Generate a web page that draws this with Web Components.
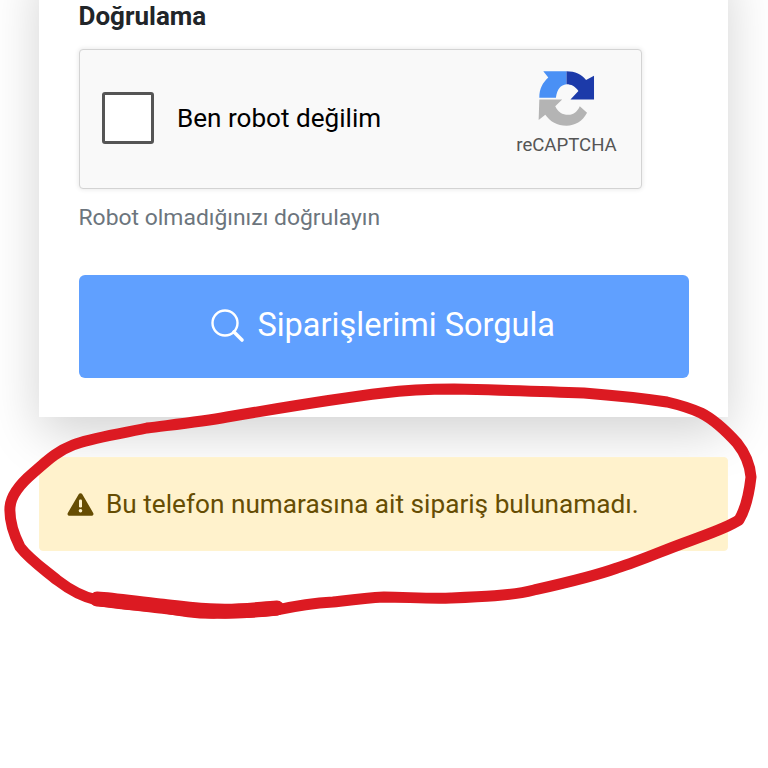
<!DOCTYPE html>
<html lang="tr"><head><meta charset="utf-8"><style>
html,body{margin:0;height:768px;overflow:hidden;background:#fff;font-family:Roboto,"Liberation Sans",sans-serif}
</style></head><body>
<x-page>
  <x-card>
    <x-captcha></x-captcha>
    <x-button>Siparişlerimi Sorgula</x-button>
  </x-card>
  <x-alert>Bu telefon numarasına ait sipariş bulunamadı.</x-alert>
</x-page>
<script>
function def(name, html){
  customElements.define(name, class extends HTMLElement{
    constructor(){super();this.attachShadow({mode:'open'}).innerHTML=html;}
  });
}
def('x-page',`<style>
:host{display:block;position:relative;width:768px;height:768px;overflow:hidden}
.col{display:flex;flex-direction:column;padding:0 39px;margin-top:-40px;box-sizing:border-box;width:767px}
svg{position:absolute;left:0;top:0;pointer-events:none}
</style>
<div class="col"><slot></slot></div>
<svg width="768" height="768" viewBox="0 0 768 768" fill="none">
<path d="M454 389C420 389 398 391 383 393C340 398 280 408 227 417C200 422 170 425 147 428C115 435 90 438 73 445C55 452 45 463 33 473C20 484 11 495 10 507C9 522 14 535 20 547C30 560 45 570 57 580C70 590 82 597 97 600C115 604 138 605 160 607C180 611 200 614 217 613C240 613 260 612 277 610C295 606 315 603 333 602C350 600 365 598 384 597C405 597 430 599 451 598C480 597 510 596 534 590C565 583 592 577 617 568C640 561 662 551 684 543C705 535 725 529 739 520C745 510 749 495 751 477C750 465 745 453 737 443C727 432 715 420 701 413C690 408 680 405 667 402C640 398 610 395 584 393C540 391 495 390 454 389Z" stroke="#dc1a22" stroke-width="11" stroke-linejoin="round"/>
<path d="M97 599C115 600 140 604 160 606C180 608 200 611 217 611C240 612 260 609 277 608" stroke="#dc1a22" stroke-width="15" stroke-linecap="round"/>
</svg>`);
def('x-card',`<style>
:host{display:block;background:#fff;box-shadow:0 16px 48px rgba(0,0,0,.175);padding:40px 39px 39px 39.5px;position:relative}
h3{margin:0;font:700 26px/32px Roboto,sans-serif;color:#212529}
</style>
<h3>Doğrulama</h3>
<div style="height:17px"></div>
<slot></slot>`);
def('x-captcha',`<style>
:host{display:block}
.box{width:563px;height:140px;box-sizing:border-box;background:#f9f9f9;border:1px solid #d3d3d3;border-radius:4px;box-shadow:0 0 4px 1px rgba(0,0,0,.08);display:flex;align-items:center;padding:0 23px 0 22.5px}
.check{width:52px;height:52px;box-sizing:border-box;background:#fff;border:3.5px solid #555;border-radius:3px;flex:none;margin-top:-3px}
.label{font:400 26.1px/32px Roboto,sans-serif;color:#000;margin-left:23px;flex:1;margin-top:-3px}
.logo{display:flex;flex-direction:column;align-items:center;width:102px;margin-top:-14px;position:relative;left:0}
.logo svg{display:block}
.logo span{font:400 18.6px/22px Roboto,sans-serif;color:#555;margin-top:3px}
.hint{font:400 22.9px/28px Roboto,sans-serif;color:#6c757d;margin:15px 0 43px}
</style>
<div class="box">
  <span class="check"></span>
  <span class="label">Ben robot değilim</span>
  <span class="logo">
    <svg width="63" height="63" viewBox="105 55 190 190">
      <path fill="#4a90f5" d="M130 65H200V104C182 106 172 118 168 145H118C118 118 128 100 145 84Z"/>
      <path fill="#1c3aa9" d="M200 65C226 65 246 74 259 91L283 78V150H212L236 124C226 110 214 104 200 104Z"/>
      <path fill="#b4b4b4" d="M118 150H187L166 170C174 188 188 196 205 196C222 196 233 186 240 170L262 190C248 216 226 229 200 229C172 229 150 216 136 196L116 212Z"/>
    </svg>
    <span>reCAPTCHA</span>
  </span>
</div>
<div class="hint">Robot olmadığınızı doğrulayın</div>`);
def('x-button',`<style>
:host{display:block}
button{all:unset;box-sizing:border-box;width:610.5px;height:103px;padding:0 2px 3px 0;background:#60a0ff;border-radius:6px;color:#fff;display:flex;align-items:center;justify-content:center;gap:12px;font:400 32.5px/40px Roboto,sans-serif}
svg{display:block}
</style>
<button><svg width="35" height="35" viewBox="0 0 35 35" fill="none" stroke="#fff"><circle cx="15" cy="15" r="12.5" stroke-width="2.4"/><path d="M24 24L32 32" stroke-width="3.6" stroke-linecap="round"/></svg><slot></slot></button>`);
def('x-alert',`<style>
:host{display:flex;align-items:center;gap:12px;box-sizing:border-box;height:94px;margin-top:39.5px;padding:0 27px;background:#fff2cc;border:1px solid #fff3cf;border-radius:4px;color:#664d03;font:400 26.2px/32px Roboto,sans-serif;position:relative}
svg{display:block;flex:none}
</style>
<svg width="27" height="24" viewBox="0 0 27 24"><path fill="#664d03" d="M13.5 1.2c.8 0 1.4.4 1.8 1.1l10.9 18.6c.8 1.4-.2 2.9-1.8 2.9H2.6c-1.6 0-2.6-1.5-1.8-2.9L11.7 2.3c.4-.7 1-1.1 1.8-1.1z"/><rect x="12" y="7.5" width="3" height="8" rx="1.2" fill="#fff3cd"/><circle cx="13.5" cy="18.8" r="1.8" fill="#fff3cd"/></svg><slot></slot>`);
</script>
</body></html>
